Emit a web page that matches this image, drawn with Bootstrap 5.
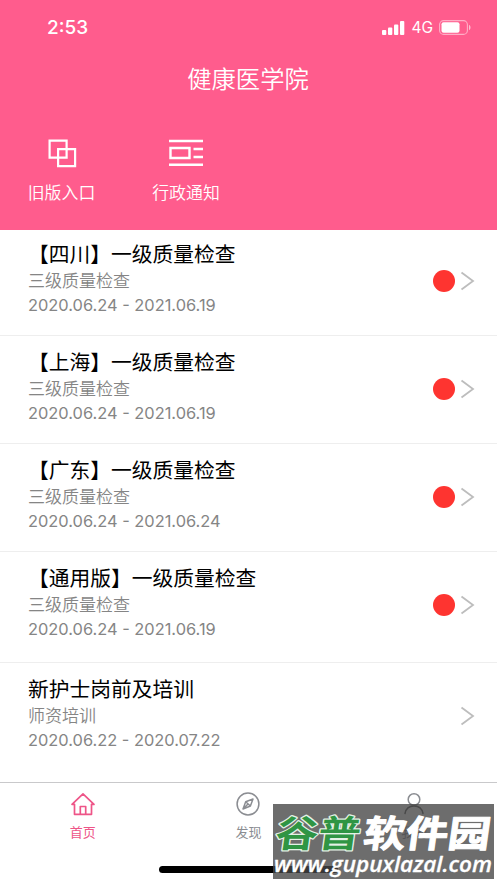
<!DOCTYPE html>
<html lang="zh-CN">
<head>
  <meta charset="UTF-8">
  <meta name="viewport" content="width=device-width, initial-scale=1.0">
  <title>健康医学院</title>
  <link rel="stylesheet" href="https://cdn.jsdelivr.net/npm/bootstrap@5.3.0/dist/css/bootstrap.min.css">
  <style>
    body {
      height: 883px;
      overflow: hidden;
      background: #fff;
      font-family: Inter, "Noto Sans CJK SC", sans-serif;
    }
    svg {
      display: block;
      flex: none;
    }
    .app-header {
      height: 230px;
      background: #ff5c8d;
      color: #fff;
    }
    .status-bar {
      height: 55px;
      padding: 0 26px 0 47px;
    }
    .status-time {
      font-size: 19px;
      font-weight: 500;
      padding-top: 1px;
    }
    .status-net {
      font-size: 15.5px;
      margin: 0 6px 0 6px;
    }
    .app-title {
      height: 49px;
      font-size: 24.3px;
      font-weight: 350;
      line-height: 49px;
      padding-right: 1px;
    }
    .entry {
      width: 123px;
      padding-top: 34px;
      font-size: 16.9px;
      font-weight: 350;
      line-height: 26px;
    }
    .entry + .entry {
      width: 126px;
    }
    .entry svg {
      margin-bottom: 12px;
    }
    .task {
      height: 108px;
      padding: 14px 22px 0 28px;
      border-bottom: 1px solid #eee;
    }
    .task:first-child {
      height: 106px;
      padding-top: 12px;
    }
    .task:nth-child(4) {
      height: 111px;
    }
    .task:last-child {
      height: 119px;
      padding-top: 14px;
      border-bottom: 0;
    }
    .task-name {
      font-size: 20.75px;
      line-height: 26px;
      color: #000;
    }
    .task-type,
    .task-date {
      font-size: 17px;
      line-height: 26px;
      color: #858585;
    }
    .task-type {
      font-weight: 350;
    }
    .task-date {
      font-size: 16.4px;
      line-height: 23px;
    }
    .task-side {
      height: 78px;
    }
    .dot {
      width: 22px;
      height: 22px;
      background: #fe3430;
      margin-right: 5px;
    }
    .tabs {
      height: 101px;
      border-top: 1px solid #c9c9cb;
      padding-top: 8px;
      color: #8b8d92;
      font-size: 13px;
      line-height: 20px;
    }
    .tabs svg {
      margin-bottom: 4px;
    }
    .tab-on {
      color: #ee5588;
    }
    .home-bar {
      left: 159px;
      top: 866px;
      width: 179px;
      height: 7px;
      background: #000;
    }
    .stamp {
      left: 273px;
      top: 804px;
      width: 221px;
      height: 75px;
      background: rgba(70, 70, 70, .79);
    }
    .stamp svg {
      overflow: visible;
    }
    .stamp text {
      paint-order: stroke;
      stroke-linejoin: round;
    }
  </style>
</head>
<body>
  <header class="app-header">
    <div class="status-bar d-flex align-items-center">
      <span class="status-time me-auto">2:53</span>
      <svg width="23" height="14" viewBox="0 0 23 14" fill="#fff">
        <rect y="9" width="4.3" height="5" rx="1"/>
        <rect x="6" y="6.5" width="4.3" height="7.5" rx="1"/>
        <rect x="12" y="3.5" width="4.3" height="10.5" rx="1"/>
        <rect x="18" width="4.3" height="14" rx="1"/>
      </svg>
      <span class="status-net">4G</span>
      <svg width="32" height="15" viewBox="0 0 32 15">
        <rect x=".6" y=".6" width="27.8" height="13.8" rx="4" fill="none" stroke="#fff" stroke-opacity=".5" stroke-width="1.1"/>
        <rect x="2.5" y="2.3" width="18" height="10.4" rx="2" fill="#fff"/>
        <path d="M30 5c2 .6 2 4.400 0 5z" fill="#fff" fill-opacity=".6"/>
      </svg>
    </div>
    <div class="app-title text-center">健康医学院</div>
    <nav class="d-flex">
      <div class="entry d-flex flex-column align-items-center">
        <svg width="30" height="30" viewBox="0 0 30 30" fill="none" stroke="#fff" stroke-width="2.200">
          <path d="M2.600 2.600h17v17h-17zM11.100 11.100h17v17h-17z"/>
        </svg>
        旧版入口
      </div>
      <div class="entry d-flex flex-column align-items-center">
        <svg width="34" height="30" viewBox="0 0 34 30" fill="none" stroke="#fff" stroke-width="2.400">
          <path d="M0 3h34M0 26.800h34M1.500 10h19v10h-19zM24.500 11H34M24.500 19H34"/>
        </svg>
        行政通知
      </div>
    </nav>
  </header>

  <main id="taskList"></main>

  <footer class="tabs d-flex">
    <div class="col-4 d-flex flex-column align-items-center tab-on">
      <svg width="26" height="27" viewBox="0 0 26 27" fill="none" stroke="currentColor" stroke-width="1.700" stroke-linejoin="round" stroke-linecap="round">
        <path d="M4.500 13.300H2L13 2.800l11 10.500h-2.500v10h-17zM10.300 23v-7.500h5.400V23"/>
      </svg>
      首页
    </div>
    <div class="col-4 d-flex flex-column align-items-center">
      <svg width="26" height="27" viewBox="0 0 26 27" fill="none" stroke="currentColor" stroke-width="1.500" stroke-linejoin="round">
        <circle cx="13" cy="13" r="10.900"/>
        <path d="M18 8l-2.600 7L8 18l2.700-7.200zM10.700 10.800l4.700 4.200M13 13l-5 5"/>
      </svg>
      发现
    </div>
    <div class="col-4 d-flex flex-column align-items-center">
      <svg width="26" height="27" viewBox="0 0 26 27" fill="none" stroke="currentColor" stroke-width="1.500" stroke-linecap="round">
        <circle cx="13" cy="8.500" r="5.800"/>
        <path d="M4 22.500c1-5.500 5-7.500 9-7.500s8 2 9 7.500" stroke="#555"/>
      </svg>
      我的
    </div>
  </footer>

  <div class="home-bar position-absolute rounded-pill"></div>
  <div class="stamp position-absolute">
    <svg width="221" height="75" viewBox="0 0 221 75">
      <g font-family="Noto Sans CJK SC, sans-serif" font-weight="700" font-size="37" transform="skewX(-8)">
        <text x="7" y="43" textLength="85" lengthAdjust="spacingAndGlyphs" fill="#2f9544" stroke="#e4f1e6" stroke-width="2.500">谷普</text>
        <text x="95" y="43" textLength="127" lengthAdjust="spacingAndGlyphs" fill="#fff" stroke="#fff" stroke-width="1">软件园</text>
      </g>
      <text x="1" y="67.500" textLength="218" lengthAdjust="spacingAndGlyphs" font-family="Open Sans, sans-serif" font-weight="600" font-style="italic" font-size="21" fill="#fff" stroke="#fff" stroke-width=".3">www.gupuxlazal.com</text>
    </svg>
  </div>

  <script>
    const tasks = [
      { name: "【四川】一级质量检查", type: "三级质量检查", date: "2020.06.24 - 2021.06.19", unread: true },
      { name: "【上海】一级质量检查", type: "三级质量检查", date: "2020.06.24 - 2021.06.19", unread: true },
      { name: "【广东】一级质量检查", type: "三级质量检查", date: "2020.06.24 - 2021.06.24", unread: true },
      { name: "【通用版】一级质量检查", type: "三级质量检查", date: "2020.06.24 - 2021.06.19", unread: true },
      { name: "新护士岗前及培训", type: "师资培训", date: "2020.06.22 - 2020.07.22", unread: false }
    ];

    // Build one row per task
    document.getElementById("taskList").innerHTML = tasks.map((task) => `
      <div class="task d-flex justify-content-between align-items-start">
        <div>
          <div class="task-name">${task.name}</div>
          <div class="task-type">${task.type}</div>
          <div class="task-date">${task.date}</div>
        </div>
        <div class="task-side d-flex align-items-center">
          ${task.unread ? '<span class="dot rounded-circle"></span>' : ""}
          <svg width="15" height="20" viewBox="0 0 15 20" fill="none" stroke="#bdbdbd" stroke-width="1.800">
            <path d="M1.500 1.500L13 10L1.500 18.500"/>
          </svg>
        </div>
      </div>`).join("");
  </script>
  <script src="https://cdn.jsdelivr.net/npm/bootstrap@5.3.0/dist/js/bootstrap.bundle.min.js"></script>
</body>
</html>
